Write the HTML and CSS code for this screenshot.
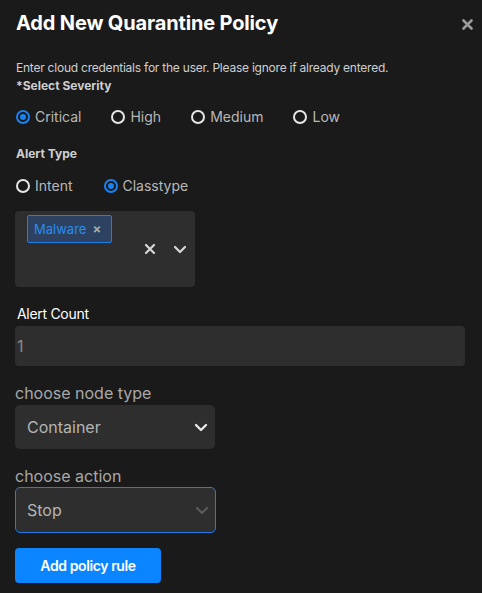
FILE: index.html
```html
<!DOCTYPE html>
<html>
<head>
<meta charset="utf-8">
<link rel="stylesheet" href="styles.css">
</head>
<body>
<div class="modal">
  <div class="header">
    <h1 class="title">Add New Quarantine Policy</h1>
    <span class="close">
      <svg width="11" height="11" viewBox="0 0 11 11"><path d="M1.5 1.5 L9.5 9.5 M9.5 1.5 L1.5 9.5" stroke="#9b9b9b" stroke-width="2.6" stroke-linecap="round"/></svg>
    </span>
  </div>
  <p class="desc">Enter cloud credentials for the user. Please ignore if already entered.</p>
  <div class="section-label sev">*Select Severity</div>
  <div class="radios sev-radios">
    <label class="radio"><span class="dot on"></span>Critical</label>
    <label class="radio"><span class="dot"></span>High</label>
    <label class="radio"><span class="dot"></span>Medium</label>
    <label class="radio"><span class="dot"></span>Low</label>
  </div>
  <div class="section-label alert">Alert Type</div>
  <div class="radios type-radios">
    <label class="radio"><span class="dot"></span>Intent</label>
    <label class="radio"><span class="dot on"></span>Classtype</label>
  </div>
  <div class="multi">
    <div class="tags">
      <span class="tag">Malware <span class="tag-x">×</span></span>
    </div>
    <div class="multi-icons">
      <svg width="12" height="12" viewBox="0 0 12 12"><path d="M2 2 L10 10 M10 2 L2 10" stroke="#d8d8d8" stroke-width="2.2" stroke-linecap="round"/></svg>
      <svg width="14" height="9" viewBox="0 0 14 9"><path d="M2 2 L7 7 L12 2" stroke="#d8d8d8" stroke-width="2.2" fill="none" stroke-linecap="round" stroke-linejoin="round"/></svg>
    </div>
  </div>
  <div class="count-label">Alert Count</div>
  <div class="input">1</div>
  <div class="field-label node">choose node type</div>
  <div class="select">
    <span>Container</span>
    <svg width="14" height="9" viewBox="0 0 14 9"><path d="M2 2 L7 7 L12 2" stroke="#e6e6e6" stroke-width="2.4" fill="none" stroke-linecap="round" stroke-linejoin="round"/></svg>
  </div>
  <div class="field-label action">choose action</div>
  <div class="select focused">
    <span>Stop</span>
    <svg width="14" height="9" viewBox="0 0 14 9"><path d="M2 2 L7 7 L12 2" stroke="#5a5a5a" stroke-width="2.2" fill="none" stroke-linecap="round" stroke-linejoin="round"/></svg>
  </div>
  <button class="btn">Add policy rule</button>
</div>
</body>
</html>
```
FILE: styles.css
```css
html, body {
  margin: 0;
  padding: 0;
  background: #1a1a1a;
}
body {
  font-family: Inter, "Noto Sans", sans-serif;
  color: #d0d0d0;
  width: 482px;
  height: 593px;
  overflow: hidden;
}
.modal {
  padding: 10px 0 0 15px;
  display: flex;
  flex-direction: column;
  align-items: flex-start;
}
.header {
  display: flex;
  justify-content: space-between;
  align-items: center;
  width: 458px;
  padding-left: 1px;
  box-sizing: border-box;
}
.title {
  margin: 0;
  font-size: 20px;
  font-weight: 700;
  color: #ffffff;
  line-height: 26px;
  letter-spacing: -0.15px;
}
.close {
  display: flex;
  margin-top: 2px;
}
.desc {
  margin: 24px 0 0 1px;
  font-size: 12px;
  line-height: 16px;
  color: #cfcfcf;
  letter-spacing: -0.23px;
}
.section-label {
  font-size: 12px;
  font-weight: 700;
  color: #cfcfcf;
  line-height: 16px;
  margin-left: 1px;
}
.sev { margin-top: 2px; }
.alert { margin-top: 19px; }
.radios {
  display: flex;
  gap: 30px;
  margin-left: 1px;
}
.sev-radios { margin-top: 13px; }
.type-radios { margin-top: 14px; gap: 31px; }
.radio {
  display: flex;
  align-items: center;
  gap: 5px;
  font-size: 14px;
  line-height: 20px;
  color: #b8b8b8;
}
.dot {
  width: 14px;
  height: 14px;
  box-sizing: border-box;
  border: 2px solid #e6e6e6;
  border-radius: 50%;
  position: relative;
}
.dot.on {
  border-color: #1a82f0;
}
.dot.on::after {
  content: "";
  position: absolute;
  left: 2px;
  top: 2px;
  width: 6px;
  height: 6px;
  border-radius: 50%;
  background: #1a82f0;
}
.multi {
  margin-top: 15px;
  width: 180px;
  height: 76px;
  background: #2e2e2e;
  border-radius: 4px;
  display: flex;
  box-sizing: border-box;
  padding: 4px 8px 0 12px;
}
.tags {
  flex: 1;
}
.tag {
  display: inline-flex;
  align-items: center;
  height: 28px;
  box-sizing: border-box;
  padding: 0 10px 0 6px;
  border: 1px solid #1a7fe8;
  border-radius: 2px;
  background: #2c4260;
  color: #2b8cf2;
  font-size: 13px;
  gap: 6px;
}
.tag-x {
  color: #a9a9a9;
  font-size: 13px;
  font-weight: 700;
}
.multi-icons {
  display: flex;
  align-items: center;
  gap: 17px;
  height: 68px;
}
.count-label {
  margin: 18px 0 0 2px;
  font-size: 14px;
  line-height: 18px;
  color: #ffffff;
  letter-spacing: -0.3px;
}
.input {
  margin-top: 3px;
  width: 450px;
  height: 40px;
  background: #2e2e2e;
  border-radius: 4px;
  box-sizing: border-box;
  padding-left: 2px;
  display: flex;
  align-items: center;
  font-size: 16px;
  color: #8a8a8a;
}
.field-label {
  font-size: 16px;
  line-height: 20px;
  color: #a8a8a8;
}
.node { margin-top: 17px; }
.action { margin-top: 17px; }
.select {
  margin-top: 2px;
  width: 200px;
  height: 44px;
  background: #2e2e2e;
  border-radius: 5px;
  box-sizing: border-box;
  padding: 0 6px 0 11px;
  display: flex;
  align-items: center;
  justify-content: space-between;
  font-size: 16px;
  color: #b4b4b4;
  border: 1px solid transparent;
}
.select.focused {
  border-color: #1f7ce6;
  height: 46px;
  width: 201px;
  margin-top: 1px;
}
.btn {
  margin-top: 15px;
  width: 146px;
  height: 35px;
  border: none;
  border-radius: 4px;
  background: #0a84ff;
  color: #ffffff;
  font-family: Inter, "Noto Sans", sans-serif;
  font-size: 14px;
  font-weight: 600;
  letter-spacing: -0.4px;
}
```
